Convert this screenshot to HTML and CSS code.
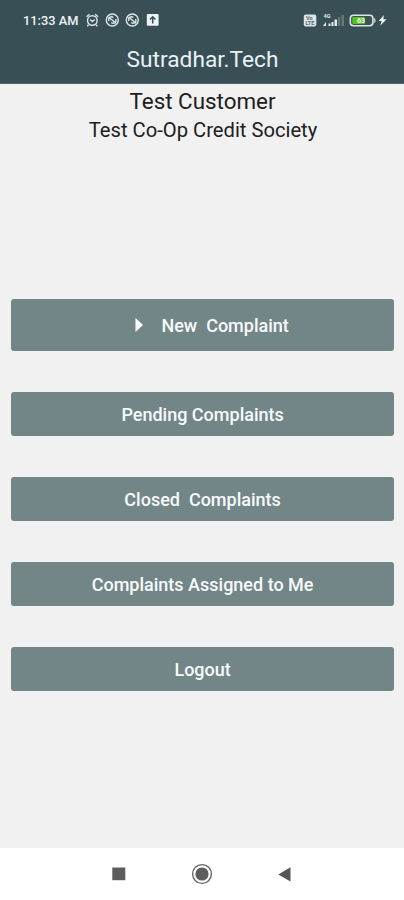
FILE: index.html
```html
<!DOCTYPE html>
<html lang="en">

	<head>
		<meta charset="utf-8" />
		<title>Sutradhar.Tech</title>
		<link rel="stylesheet" href="styles.css">
	</head>

	<body>
		<header>
			<div class="status">
				<span class="time">11:33 AM</span>
				<svg class="notices" width="74" height="16" viewBox="0 0 74 16">
					<g fill="none" stroke="#dce6e8" stroke-width="1.4">
						<circle cx="7.3" cy="8.5" r="4.8" />
						<path d="M1.5 4.8l3-2.6M13.1 4.8l-3-2.6M3.5 12.8l-1.2 1.4M11.1 12.8l1.2 1.4M5.1 7.5l2.3 2 2.3-2" />
						<circle cx="27.3" cy="8" r="6" />
						<path d="M23.8 9V6.2q2.5-2.4 4.5-.6M30.8 7v2.8q-2.5 2.4-4.5.6M23.6 5l7.4 6.2" />
						<circle cx="47.3" cy="8" r="6" />
						<path d="M43.8 9V6.2q2.5-2.4 4.5-.6M50.8 7v2.8q-2.5 2.4-4.5.6M43.6 5l7.4 6.2" />
					</g>
					<rect x="61.8" y="2" width="11.8" height="11.8" rx="1" fill="#eef3f4" />
					<path d="M67.7 11.5V6M65 7.5l2.7-2.7 2.7 2.7" fill="none" stroke="#374f55" stroke-width="1.5" />
				</svg>
				<svg class="signals" width="84" height="20" viewBox="0 0 84 20">
					<rect x=".8" y="4.5" width="12.5" height="12" rx="2" fill="#dce5e6" />
					<text class="tiny dark" x="3" y="10">Vo</text>
					<text class="tiny dark" x="2.5" y="15.3">LTE</text>
					<text class="tiny" x="20.5" y="7.8">4G</text>
					<path d="M20 16l3-4v4zM25.5 16v-2.5h2V16zM28.5 16v-4h2v4zM31.5 16V9.5H34V16z" fill="#e3eaeb" />
					<path d="M35 16V7h2.2v9zM38.5 16V5H41v11z" fill="#65777b" />
					<rect x="47.3" y="5.2" width="22.6" height="10.6" rx="3.2" fill="#3b5257" stroke="#dce5e6" stroke-width="1.6" />
					<rect x="49.3" y="7" width="12.5" height="7" rx="1" fill="#54c51c" />
					<path d="M71.2 8c1.8.6 1.8 4.4 0 5z" fill="#dce5e6" />
					<text class="level" x="54" y="13">63</text>
					<path d="M81 5l-5.3 6h3l-1.5 4.7 6.3-6.5h-3.2z" fill="#eef3f4" />
				</svg>
			</div>
			<h1>Sutradhar.Tech</h1>
		</header>
		<main>
			<p class="customer">Test Customer</p>
			<p class="society">Test Co-Op Credit Society</p>
			<div class="menu">
				<button class="new">
					<svg width="8" height="14" viewBox="0 0 8 14"><path d="M.5 0L8 7 .5 14z" fill="#fff" /></svg>
					<span>New&nbsp; Complaint</span>
				</button>
				<button>Pending Complaints</button>
				<button>Closed&nbsp; Complaints</button>
				<button>Complaints Assigned to Me</button>
				<button>Logout</button>
			</div>
		</main>
		<nav>
			<svg width="14" height="14" viewBox="0 0 14 14"><rect x=".3" y=".5" width="13" height="12.7" fill="#5d5d5d" /></svg>
			<svg class="home" width="22" height="22" viewBox="0 0 22 22">
				<circle cx="11" cy="11" r="9.4" fill="none" stroke="#686868" stroke-width="1.4" />
				<circle cx="11" cy="11" r="6.6" fill="#5d5d5d" />
			</svg>
			<svg width="13" height="15" viewBox="0 0 13 15"><path d="M12.5.3v14.2L.3 7.4z" fill="#555" /></svg>
		</nav>
	</body>

</html>
```
FILE: styles.css
```css
* {
	box-sizing: border-box;
}

body {
	margin: 0;
	height: 900px;
	display: flex;
	flex-direction: column;
	background: #f1f1f1;
	font-family: Roboto, "Liberation Sans", sans-serif;
	color: #202020;
}

header {
	height: 84px;
	background: #374f55;
	border-bottom: 1px solid #52676b;
}

.status {
	display: flex;
	align-items: center;
	height: 40px;
	padding: 0 17px 0 23px;
}

.time {
	width: 62px;
	font-size: 12.8px;
	font-weight: 500;
	color: #eef3f4;
	white-space: nowrap;
}

.signals {
	margin-left: auto;
}

.tiny {
	font-size: 5.5px;
	font-weight: 700;
	fill: #e3eaeb;
}

.dark {
	fill: #59696c;
}

.level {
	font-size: 7px;
	font-weight: 700;
	fill: #fff;
}

h1 {
	margin: 0;
	padding-left: 1px;
	line-height: 40px;
	font-size: 22.7px;
	font-weight: 400;
	text-align: center;
	color: #eaf2f5;
}

main {
	flex: 1;
	text-align: center;
}

p {
	margin: 0;
}

.customer {
	padding: 3px 0 0 1px;
	font-size: 22.4px;
	line-height: 29px;
}

.society {
	padding-left: 2px;
	font-size: 20.2px;
	line-height: 29px;
}

.menu {
	display: flex;
	flex-direction: column;
	gap: 41px;
	padding: 154px 9.6px 0 10.8px;
}

button {
	display: flex;
	align-items: center;
	justify-content: center;
	height: 44px;
	padding: 1px 0 0;
	border: 0;
	border-radius: 3px;
	background: #738687;
	font-family: inherit;
	font-size: 18px;
	font-weight: 500;
	color: #f7fbfc;
}

.new {
	height: 51.5px;
	gap: 18px;
	padding-left: 19px;
}

nav {
	display: flex;
	align-items: center;
	justify-content: space-between;
	height: 52px;
	padding: 0 113px 0 112px;
	background: #fff;
}

.home {
	margin-right: 1px;
}
```
